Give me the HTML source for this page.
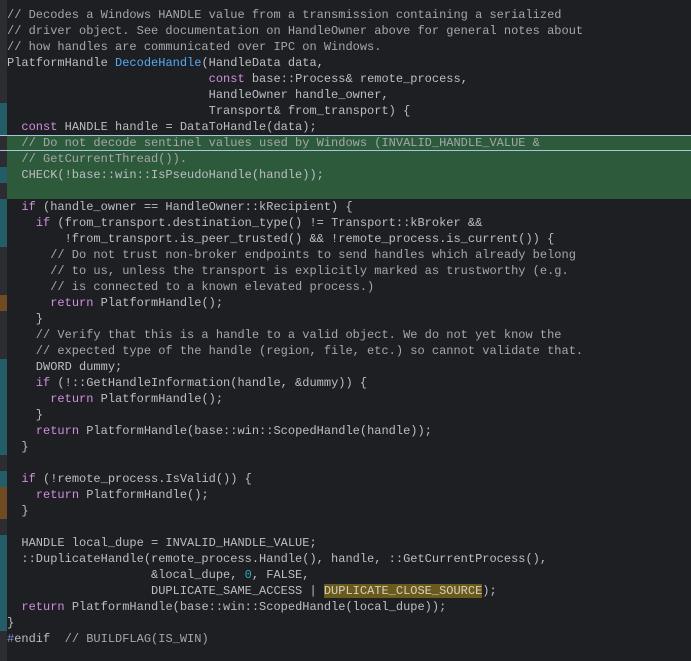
<!DOCTYPE html>
<html><head><meta charset="utf-8"><style>
html,body{margin:0;padding:0;background:#1e1f22;width:691px;height:661px;overflow:hidden}
#ed{position:relative;width:691px;height:661px;font-family:"Liberation Mono",monospace;font-size:12px;color:#bcbec4}
.g{position:absolute;left:0;width:7px}
.l{position:absolute;left:7px;height:16px;line-height:16px;white-space:pre}
.k{color:#cf8ee0}.f{color:#56a8f5}.c{color:#a4a7ad}.n{color:#2aacb8}.p{color:#7f8fd6}
.hl{background:#6b5a1e;color:#d6d2bf}
</style></head><body><div id="ed">
<div class="g" style="top:0;height:661px;background:#2b2d30"></div>
<div class="g" style="top:103px;height:32px;background:#245c68"></div>
<div class="g" style="top:167px;height:16px;background:#245c68"></div>
<div class="g" style="top:199px;height:48px;background:#245c68"></div>
<div class="g" style="top:295px;height:16px;background:#6f4a22"></div>
<div class="g" style="top:359px;height:96px;background:#245c68"></div>
<div class="g" style="top:471px;height:16px;background:#245c68"></div>
<div class="g" style="top:487px;height:32px;background:#6f4a22"></div>
<div class="g" style="top:535px;height:96px;background:#245c68"></div>
<div style="position:absolute;left:7px;top:135px;width:684px;height:64px;background:#2d5a3a"></div>
<div style="position:absolute;left:0;top:135px;width:691px;height:1px;background:#a9c4e0"></div>
<div style="position:absolute;left:0;top:150px;width:691px;height:1px;background:#a9c4e0"></div>
<div class="l c" style="top:7px">// Decodes a Windows HANDLE value from a transmission containing a serialized</div>
<div class="l c" style="top:23px">// driver object. See documentation on HandleOwner above for general notes about</div>
<div class="l c" style="top:39px">// how handles are communicated over IPC on Windows.</div>
<div class="l" style="top:55px">PlatformHandle <span class="f">DecodeHandle</span>(HandleData data,</div>
<div class="l" style="top:71px">                            <span class="k">const</span> base::Process&amp; remote_process,</div>
<div class="l" style="top:87px">                            HandleOwner handle_owner,</div>
<div class="l" style="top:103px">                            Transport&amp; from_transport) {</div>
<div class="l" style="top:119px">  <span class="k">const</span> HANDLE handle = DataToHandle(data);</div>
<div class="l c" style="top:135px">  // Do not decode sentinel values used by Windows (INVALID_HANDLE_VALUE &amp;</div>
<div class="l c" style="top:151px">  // GetCurrentThread()).</div>
<div class="l" style="top:167px">  CHECK(!base::win::IsPseudoHandle(handle));</div>
<div class="l" style="top:199px">  <span class="k">if</span> (handle_owner == HandleOwner::kRecipient) {</div>
<div class="l" style="top:215px">    <span class="k">if</span> (from_transport.destination_type() != Transport::kBroker &amp;&amp;</div>
<div class="l" style="top:231px">        !from_transport.is_peer_trusted() &amp;&amp; !remote_process.is_current()) {</div>
<div class="l c" style="top:247px">      // Do not trust non-broker endpoints to send handles which already belong</div>
<div class="l c" style="top:263px">      // to us, unless the transport is explicitly marked as trustworthy (e.g.</div>
<div class="l c" style="top:279px">      // is connected to a known elevated process.)</div>
<div class="l" style="top:295px">      <span class="k">return</span> PlatformHandle();</div>
<div class="l" style="top:311px">    }</div>
<div class="l c" style="top:327px">    // Verify that this is a handle to a valid object. We do not yet know the</div>
<div class="l c" style="top:343px">    // expected type of the handle (region, file, etc.) so cannot validate that.</div>
<div class="l" style="top:359px">    DWORD dummy;</div>
<div class="l" style="top:375px">    <span class="k">if</span> (!::GetHandleInformation(handle, &amp;dummy)) {</div>
<div class="l" style="top:391px">      <span class="k">return</span> PlatformHandle();</div>
<div class="l" style="top:407px">    }</div>
<div class="l" style="top:423px">    <span class="k">return</span> PlatformHandle(base::win::ScopedHandle(handle));</div>
<div class="l" style="top:439px">  }</div>
<div class="l" style="top:471px">  <span class="k">if</span> (!remote_process.IsValid()) {</div>
<div class="l" style="top:487px">    <span class="k">return</span> PlatformHandle();</div>
<div class="l" style="top:503px">  }</div>
<div class="l" style="top:535px">  HANDLE local_dupe = INVALID_HANDLE_VALUE;</div>
<div class="l" style="top:551px">  ::DuplicateHandle(remote_process.Handle(), handle, ::GetCurrentProcess(),</div>
<div class="l" style="top:567px">                    &amp;local_dupe, <span class="n">0</span>, FALSE,</div>
<div class="l" style="top:583px">                    DUPLICATE_SAME_ACCESS | <span class="hl">DUPLICATE_CLOSE_SOURCE</span>);</div>
<div class="l" style="top:599px">  <span class="k">return</span> PlatformHandle(base::win::ScopedHandle(local_dupe));</div>
<div class="l" style="top:615px">}</div>
<div class="l" style="top:631px"><span class="p">#</span>endif  <span class="c">// BUILDFLAG(IS_WIN)</span></div>
</div></body></html>
